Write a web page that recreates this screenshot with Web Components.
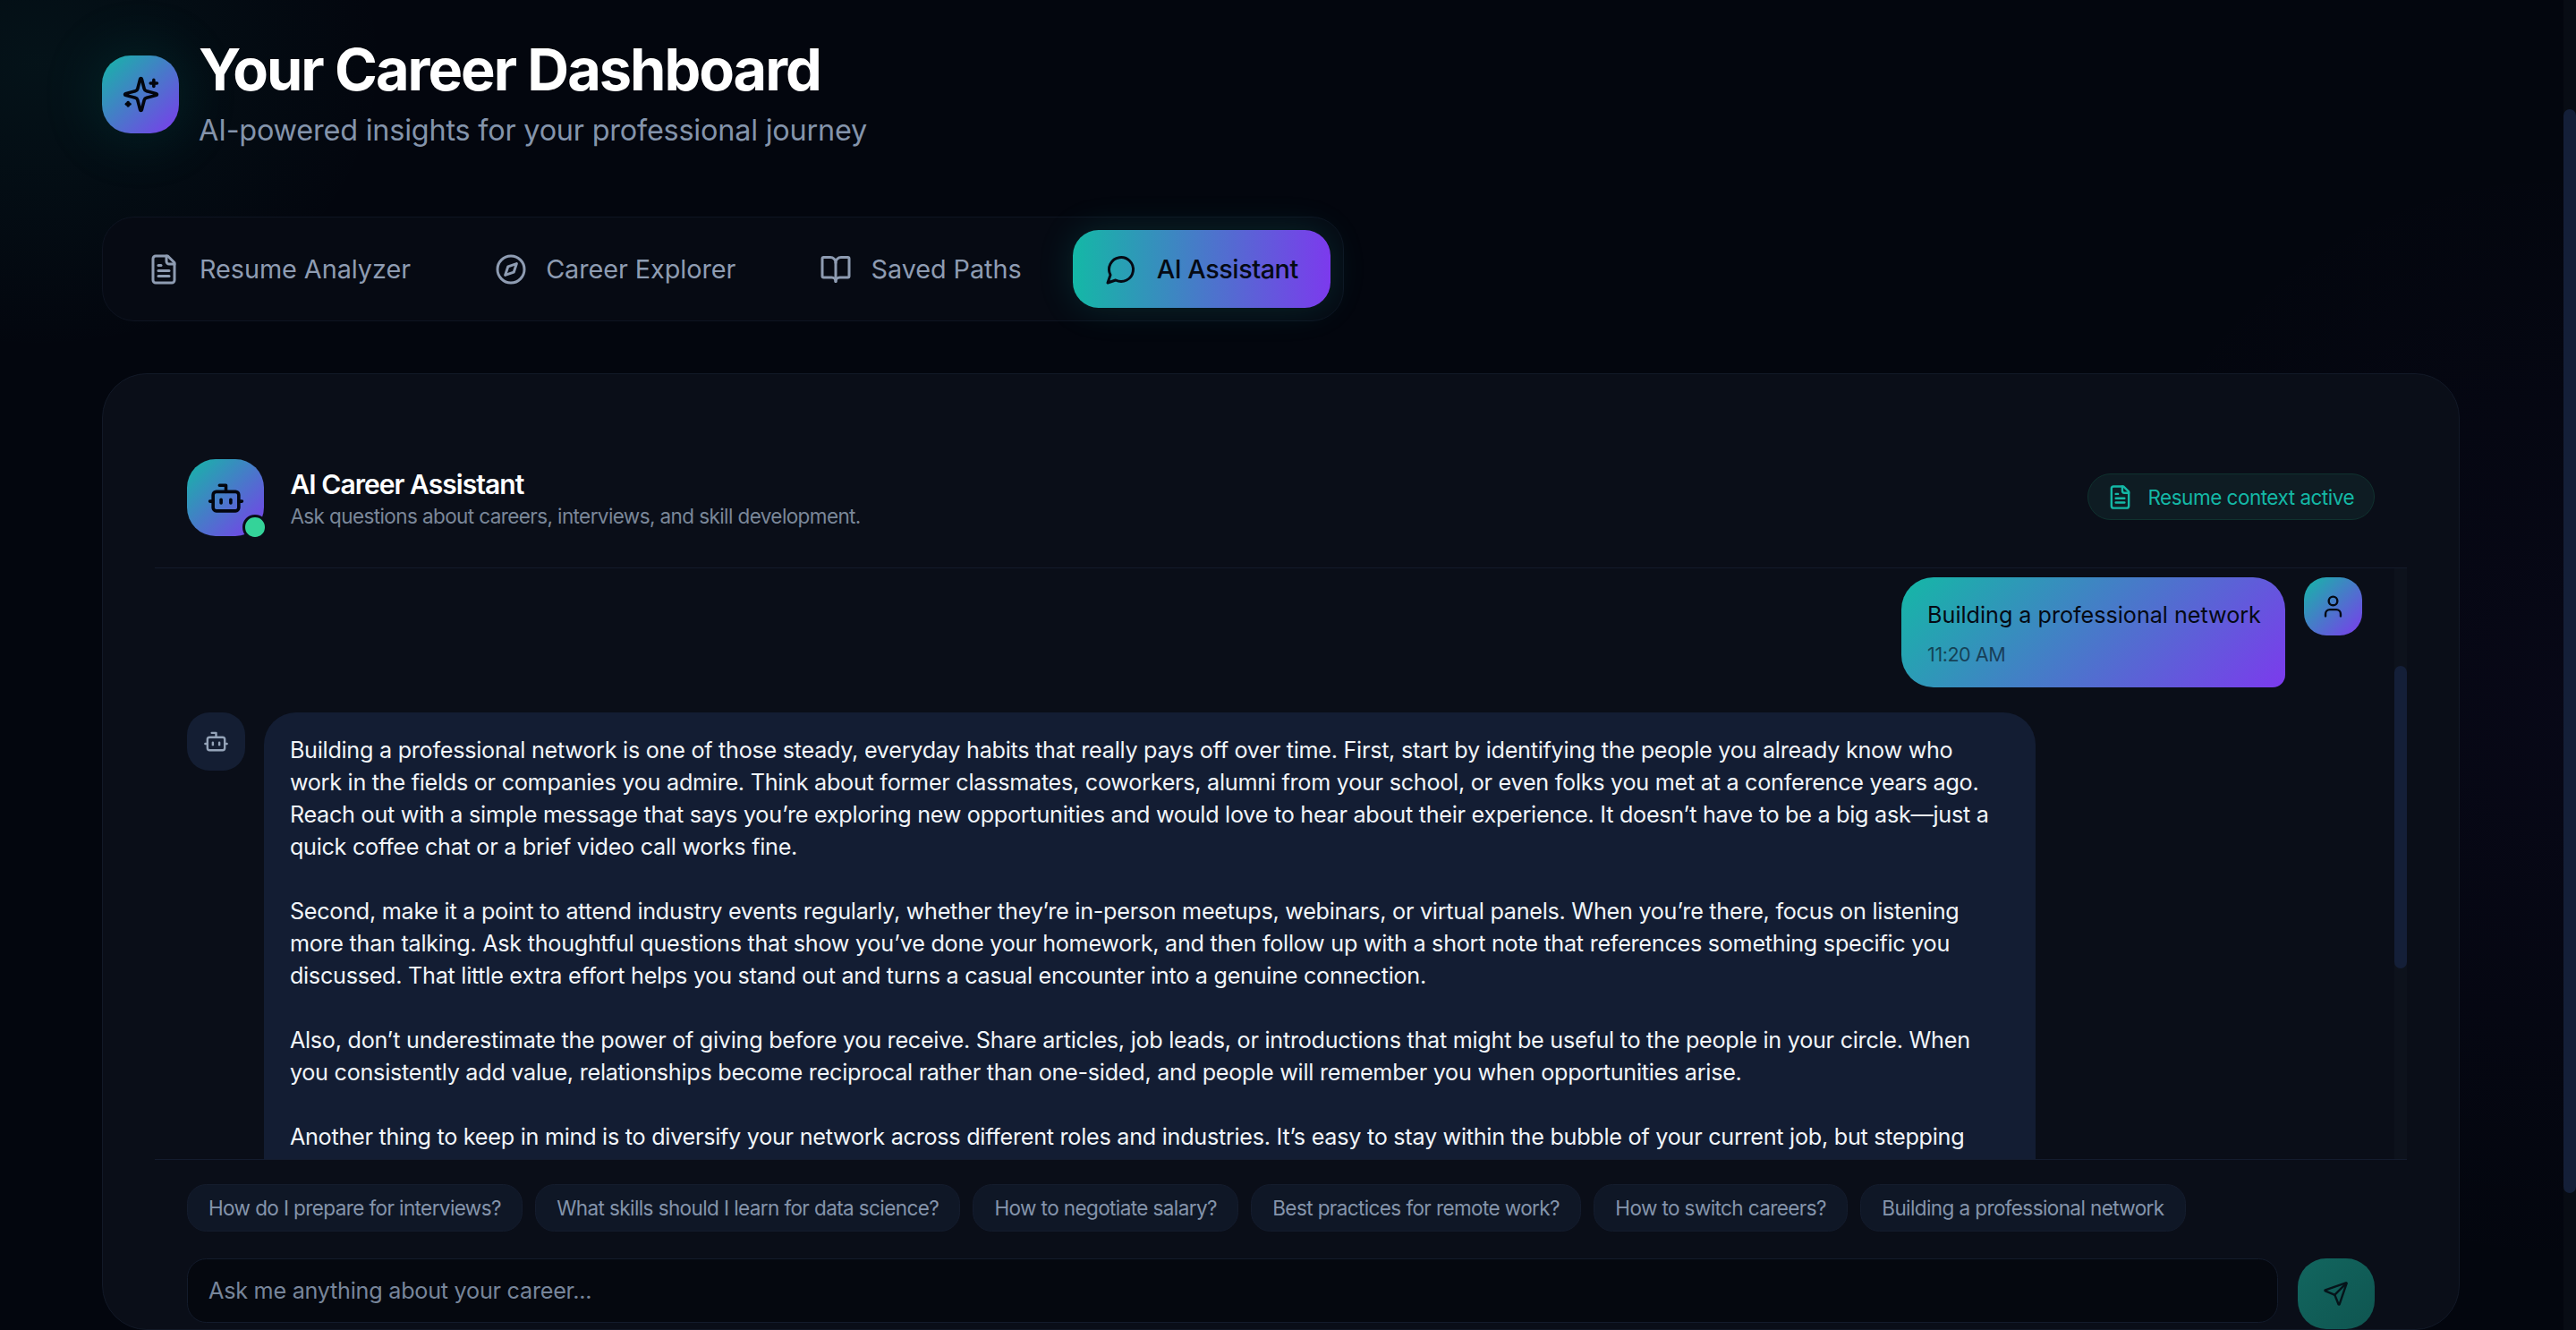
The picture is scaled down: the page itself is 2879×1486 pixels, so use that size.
<!DOCTYPE html>
<html lang="en">
<head>
<meta charset="utf-8">
<title>Your Career Dashboard</title>
<style>
  html, body { margin: 0; height: 100%; background: #03060e; overflow: hidden; }
  body { font-family: Inter, "Noto Sans", "Liberation Sans", sans-serif; color: #f1f5f9; }
</style>
</head>
<body>
<career-app>
  <page-header slot="main" heading="Your Career Dashboard" subtitle="AI-powered insights for your professional journey"></page-header>
  <nav-tabs slot="main">
    <nav-tab icon="file">Resume Analyzer</nav-tab>
    <nav-tab icon="compass">Career Explorer</nav-tab>
    <nav-tab icon="book">Saved Paths</nav-tab>
    <nav-tab icon="chat" active>AI Assistant</nav-tab>
  </nav-tabs>
  <chat-card slot="main">
    <chat-header slot="header"></chat-header>
    <user-msg slot="messages" time="11:20 AM">Building a professional network</user-msg>
    <bot-msg slot="messages">Building a professional network is one of those steady, everyday habits that really pays off over time. First, start by identifying the people you already know who<br>work in the fields or companies you admire. Think about former classmates, coworkers, alumni from your school, or even folks you met at a conference years ago.<br>Reach out with a simple message that says you’re exploring new opportunities and would love to hear about their experience. It doesn’t have to be a big ask—just a<br>quick coffee chat or a brief video call works fine.<br><br>Second, make it a point to attend industry events regularly, whether they’re in-person meetups, webinars, or virtual panels. When you’re there, focus on listening<br>more than talking. Ask thoughtful questions that show you’ve done your homework, and then follow up with a short note that references something specific you<br>discussed. That little extra effort helps you stand out and turns a casual encounter into a genuine connection.<br><br>Also, don’t underestimate the power of giving before you receive. Share articles, job leads, or introductions that might be useful to the people in your circle. When<br>you consistently add value, relationships become reciprocal rather than one-sided, and people will remember you when opportunities arise.<br><br>Another thing to keep in mind is to diversify your network across different roles and industries. It’s easy to stay within the bubble of your current job, but stepping<br>outside it often brings fresh ideas and unexpected openings.</bot-msg>
    <suggest-chip slot="chips">How do I prepare for interviews?</suggest-chip>
    <suggest-chip slot="chips">What skills should I learn for data science?</suggest-chip>
    <suggest-chip slot="chips">How to negotiate salary?</suggest-chip>
    <suggest-chip slot="chips">Best practices for remote work?</suggest-chip>
    <suggest-chip slot="chips">How to switch careers?</suggest-chip>
    <suggest-chip slot="chips">Building a professional network</suggest-chip>
    <chat-input slot="input"></chat-input>
  </chat-card>
</career-app>

<script>
const ICONS = {
  file: '<path d="M15 2H6a2 2 0 0 0-2 2v16a2 2 0 0 0 2 2h12a2 2 0 0 0 2-2V7Z"/><path d="M14 2v4a2 2 0 0 0 2 2h4"/><path d="M10 9H8"/><path d="M16 13H8"/><path d="M16 17H8"/>',
  compass: '<circle cx="12" cy="12" r="10"/><path d="m16.24 7.76-2.12 6.36-6.36 2.12 2.12-6.36 6.36-2.12z"/>',
  book: '<path d="M12 7v14"/><path d="M3 18a1 1 0 0 1-1-1V4a1 1 0 0 1 1-1h5a4 4 0 0 1 4 4 4 4 0 0 1 4-4h5a1 1 0 0 1 1 1v13a1 1 0 0 1-1 1h-6a3 3 0 0 0-3 3 3 3 0 0 0-3-3z"/>',
  chat: '<path d="M7.9 20A9 9 0 1 0 4 16.1L2 22Z"/>',
  sparkles: '<path d="M9.937 15.5A2 2 0 0 0 8.5 14.063l-6.135-1.582a.5.5 0 0 1 0-.962L8.5 9.936A2 2 0 0 0 9.937 8.5l1.582-6.135a.5.5 0 0 1 .963 0L14.063 8.5A2 2 0 0 0 15.5 9.937l6.135 1.581a.5.5 0 0 1 0 .964L15.5 14.063a2 2 0 0 0-1.437 1.437l-1.582 6.135a.5.5 0 0 1-.963 0z"/><path d="M20 3v4"/><path d="M22 5h-4"/><path d="M4 17v2"/><path d="M5 18H3"/>',
  bot: '<path d="M12 8V4H8"/><rect width="16" height="12" x="4" y="8" rx="2"/><path d="M2 14h2"/><path d="M20 14h2"/><path d="M15 13v2"/><path d="M9 13v2"/>',
  user: '<path d="M19 21v-2a4 4 0 0 0-4-4H9a4 4 0 0 0-4 4v2"/><circle cx="12" cy="7" r="4"/>',
  send: '<path d="M14.536 21.686a.5.5 0 0 0 .937-.024l6.5-19a.496.496 0 0 0-.635-.635l-19 6.5a.5.5 0 0 0-.024.937l7.93 3.18a2 2 0 0 1 1.112 1.11z"/><path d="m21.854 2.147-10.94 10.939"/>'
};

function icon(name, size) {
  return `<svg xmlns="http://www.w3.org/2000/svg" width="${size}" height="${size}" viewBox="0 0 24 24" fill="none" stroke="currentColor" stroke-width="2" stroke-linecap="round" stroke-linejoin="round">${ICONS[name]}</svg>`;
}

const GRAD = 'linear-gradient(135deg, #14b8a6 0%, #7c3aed 100%)';

class CareerApp extends HTMLElement {
  constructor() {
    super();
    this.attachShadow({ mode: 'open' }).innerHTML = `
      <style>
        :host { display: flex; width: 100%; height: 1486px; overflow: hidden;
          background:
            radial-gradient(560px 460px at 40px 70px, rgba(20,184,166,.07), transparent 70%),
            radial-gradient(800px 900px at 2860px 800px, rgba(124,58,237,.04), transparent 70%),
            #03060e; }
        .main { flex: 1; min-width: 0; padding: 42px 116px 0 114px; display: flex; flex-direction: column; }
        .rail { flex: none; width: 14px; height: 100%; background: #080c14; }
        .thumb { margin-top: 122px; height: 1211px; background: #141f38; border-radius: 7px; }
      </style>
      <div class="main"><slot name="main"></slot></div>
      <div class="rail"><div class="thumb"></div></div>`;
  }
}

class PageHeader extends HTMLElement {
  constructor() {
    super();
    this.attachShadow({ mode: 'open' }).innerHTML = `
      <style>
        :host { display: flex; align-items: center; gap: 21.6px; }
        .tile { width: 86.4px; height: 86.4px; border-radius: 32px; background: ${GRAD}; color: #03060e;
          display: flex; align-items: center; justify-content: center; box-shadow: 0 0 72px rgba(20,184,166,.16); }
        h1 { margin: 0; font-size: 64.8px; line-height: 72px; font-weight: 700; color: #fff; letter-spacing: -2px; white-space: nowrap; }
        p { margin: 9px 0 0; font-size: 32.4px; line-height: 46px; color: #8494ab; letter-spacing: -.2px; white-space: nowrap; }
      </style>
      <div class="tile">${icon('sparkles', 43)}</div>
      <div><h1>${this.getAttribute('heading')}</h1><p>${this.getAttribute('subtitle')}</p></div>`;
  }
}

class NavTabs extends HTMLElement {
  constructor() {
    super();
    this.attachShadow({ mode: 'open' }).innerHTML = `
      <style>
        :host { display: flex; align-self: flex-start; gap: 21.6px; margin-top: 73px; padding: 14.4px; border-radius: 36px;
          background: #060a13; border: 1px solid #0e1421; }
      </style>
      <slot></slot>`;
  }
}

class NavTab extends HTMLElement {
  constructor() {
    super();
    this.attachShadow({ mode: 'open' }).innerHTML = `
      <style>
        :host { display: flex; align-items: center; gap: 21.6px; height: 86.4px; padding: 0 36px; border-radius: 28.8px;
          font-size: 28.8px; font-weight: 400; letter-spacing: -.05px; white-space: nowrap;
          color: #8e9cb2; }
        :host([active]) { color: #050a14; font-weight: 500; letter-spacing: -.45px;
          background: linear-gradient(90deg, #14b8a6, #7c3aed); box-shadow: 0 0 40px rgba(20,184,166,.16); }
      </style>
      ${icon(this.getAttribute('icon'), 36)}<slot></slot>`;
  }
}

class ChatCard extends HTMLElement {
  constructor() {
    super();
    this.attachShadow({ mode: 'open' }).innerHTML = `
      <style>
        :host { display: block; margin-top: 58px; height: 1200px; padding: 0 58px; border-radius: 50px; box-sizing: border-box;
          background: #0a0e18; border: 1px solid #121927; }
        .head { height: 217px; box-sizing: border-box; border-bottom: 1px solid #131a2a; }
        .scroll { display: flex; height: 660px; overflow: hidden; border-bottom: 1px solid #141c2e; }
        .msgs { flex: 1; min-width: 0; padding: 10px 36px 0; display: flex; flex-direction: column; gap: 28px; overflow: hidden; }
        .bar { width: 14px; background: #0d121c; }
        .bar div { margin-top: 109px; height: 338px; background: #141f38; border-radius: 7px; }
        .chips { display: flex; gap: 14.4px; padding: 27px 36px 0; }
        .input { padding: 30px 36px 0; }
      </style>
      <div class="head"><slot name="header"></slot></div>
      <div class="scroll">
        <div class="msgs"><slot name="messages"></slot></div>
        <div class="bar"><div></div></div>
      </div>
      <div class="chips"><slot name="chips"></slot></div>
      <div class="input"><slot name="input"></slot></div>`;
  }
}

class ChatHeader extends HTMLElement {
  constructor() {
    super();
    this.attachShadow({ mode: 'open' }).innerHTML = `
      <style>
        :host { display: flex; align-items: center; height: 100%; padding: 0 36px; box-sizing: border-box; gap: 29px; }
        .tile { position: relative; width: 86.4px; height: 86.4px; margin-top: 60px; border-radius: 32px; background: ${GRAD}; color: #03060e;
          display: flex; align-items: center; justify-content: center; flex: none; }
        .dot { position: absolute; right: -3.6px; bottom: -3.6px; width: 21.6px; height: 21.6px; border-radius: 50%; background: #34d399; border: 3.6px solid #0a0e18; }
        .txt { flex: 1; margin-top: 62px; }
        h2 { margin: 0; font-size: 30px; line-height: 40px; font-weight: 600; color: #fff; letter-spacing: -.95px; }
        p { margin: 0; font-size: 22.5px; line-height: 32px; color: #7a8799; letter-spacing: -.6px; }
        .pill { display: flex; align-items: center; gap: 16px; height: 52px; padding: 0 22px 0 21px; box-sizing: border-box; margin-top: 58px;
          border-radius: 26px; background: #0e1c23; border: 1px solid #10322f; color: #14b8a6; font-size: 22.5px; letter-spacing: -.5px; white-space: nowrap; }
      </style>
      <div class="tile">${icon('bot', 43)}<span class="dot"></span></div>
      <div class="txt"><h2>AI Career Assistant</h2><p>Ask questions about careers, interviews, and skill development.</p></div>
      <div class="pill">${icon('file', 29)}Resume context active</div>`;
  }
}

class UserMsg extends HTMLElement {
  constructor() {
    super();
    this.attachShadow({ mode: 'open' }).innerHTML = `
      <style>
        :host { display: flex; justify-content: flex-end; gap: 21.6px; }
        .bubble { box-sizing: border-box; width: 429px; height: 123px; padding: 24px 29px 0 29.5px; border-radius: 36px 36px 14px 36px; background: ${GRAD}; color: #050a14;
          font-size: 25.2px; line-height: 36px; letter-spacing: -.03px; white-space: nowrap; }
        .time { font-size: 21.6px; line-height: 28.8px; margin-top: 12px; opacity: .6; letter-spacing: -.5px; }
        .av { width: 64.8px; height: 64.8px; border-radius: 25px; background: ${GRAD}; color: #050a14; display: flex; align-items: center; justify-content: center; flex: none; }
      </style>
      <div class="bubble"><slot></slot><div class="time">${this.getAttribute('time')}</div></div>
      <div class="av">${icon('user', 29)}</div>`;
  }
}

class BotMsg extends HTMLElement {
  constructor() {
    super();
    this.attachShadow({ mode: 'open' }).innerHTML = `
      <style>
        :host { display: flex; gap: 21.6px; }
        .av { width: 64.8px; height: 64.8px; border-radius: 25px; background: #141e33; color: #94a3b8; display: flex; align-items: center; justify-content: center; flex: none; }
        .bubble { box-sizing: border-box; width: 1980px; padding: 23.5px 28.5px; border-radius: 36px 36px 36px 14px; background: #131d33; color: #f1f5f9;
          font-size: 25.2px; line-height: 36px; letter-spacing: -.27px; white-space: nowrap; }
      </style>
      <div class="av">${icon('bot', 29)}</div>
      <div class="bubble"><slot></slot></div>`;
  }
}

class SuggestChip extends HTMLElement {
  constructor() {
    super();
    this.attachShadow({ mode: 'open' }).innerHTML = `
      <style>
        :host { display: flex; align-items: center; height: 53px; padding: 0 23px; box-sizing: border-box; border-radius: 21.6px;
          background: #0f1726; border: 1px solid #141c2d; color: #8494ab; font-size: 22.5px; letter-spacing: -.6px; white-space: nowrap; }
      </style>
      <slot></slot>`;
  }
}

class ChatInput extends HTMLElement {
  constructor() {
    super();
    this.attachShadow({ mode: 'open' }).innerHTML = `
      <style>
        :host { display: flex; gap: 22px; }
        .box { flex: 1; height: 72px; box-sizing: border-box; padding: 0 23px; display: flex; align-items: center; border-radius: 21.6px;
          background: #05080f; border: 1px solid #131b2b; color: #77859a; font-size: 25.2px; letter-spacing: -.25px; }
        button { width: 86.4px; height: 79px; border: 0; padding: 0; border-radius: 32px; color: #06141a;
          background: linear-gradient(135deg, #12665f, #0f5550); display: flex; align-items: center; justify-content: center; }
      </style>
      <div class="box">Ask me anything about your career...</div>
      <button aria-label="Send">${icon('send', 29)}</button>`;
  }
}

customElements.define('career-app', CareerApp);
customElements.define('page-header', PageHeader);
customElements.define('nav-tabs', NavTabs);
customElements.define('nav-tab', NavTab);
customElements.define('chat-card', ChatCard);
customElements.define('chat-header', ChatHeader);
customElements.define('user-msg', UserMsg);
customElements.define('bot-msg', BotMsg);
customElements.define('suggest-chip', SuggestChip);
customElements.define('chat-input', ChatInput);
</script>
</body>
</html>
